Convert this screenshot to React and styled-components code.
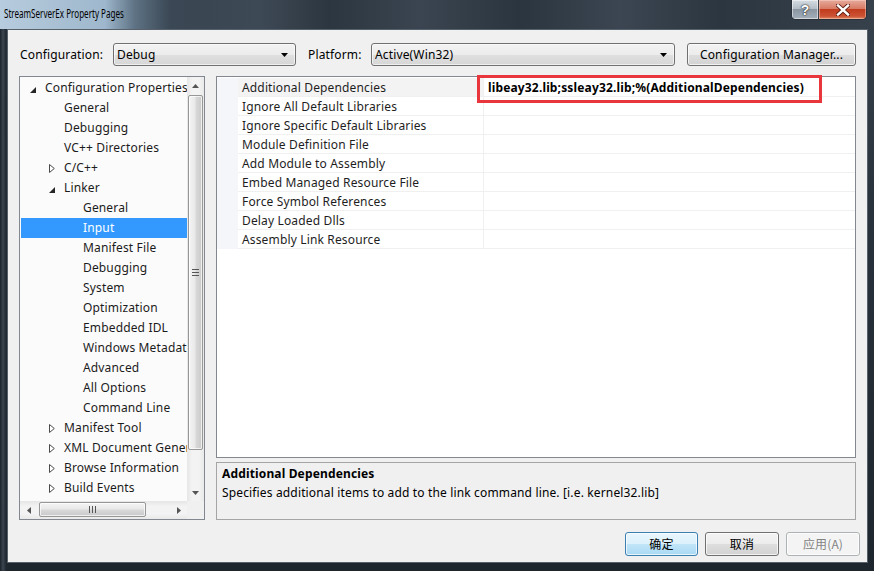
import React from 'react';
import styled, { createGlobalStyle } from 'styled-components';

const Global = createGlobalStyle`
  html, body { margin: 0; padding: 0; background: #1f2832; }
  body { width: 874px; height: 571px; overflow: hidden; font-family: "Noto Sans", "Open Sans", sans-serif; font-size: 12px; color: #000; letter-spacing: 0.15px; }
  * { box-sizing: border-box; }
`;

const Window = styled.div`
  width: 874px;
  height: 571px;
  display: flex;
  flex-direction: column;
  background:
    linear-gradient(90deg, #1a2129 0px, #3b4651 3px, #202830 6px, transparent 8px),
    linear-gradient(180deg, #36424e 0%, #29333d 35%, #1d252d 100%);
  overflow: hidden;
`;

const TitleBar = styled.div`
  height: 29px;
  flex: none;
  display: flex;
  align-items: flex-start;
  background:
    linear-gradient(90deg, rgba(190,212,230,0.95) 0px, rgba(170,196,218,0.9) 105px, rgba(120,146,168,0.6) 135px, rgba(70,86,102,0.2) 170px, transparent 205px),
    linear-gradient(90deg, #2f3b47 0px, #3d4955 260px, #2c3640 330px, #3a4551 420px, #2b353f 520px, #3b4652 620px, #2c3640 720px, #36414c 874px);
`;

const TitleText = styled.span`
  display: inline-block;
  margin: 5px 0 0 4px;
  font-size: 13px;
  line-height: 17px;
  letter-spacing: 0;
  white-space: nowrap;
  color: #000;
  transform: scaleX(0.62);
  transform-origin: left center;
`;

const CaptionGroup = styled.div`
  margin-left: auto;
  margin-right: 7px;
  display: flex;
  height: 20px;
  border: 1px solid #2a3038;
  border-top: none;
  border-radius: 0 0 5px 5px;
  overflow: hidden;
`;

const HelpButton = styled.div`
  width: 27px;
  height: 19px;
  display: flex;
  align-items: center;
  justify-content: center;
  background: linear-gradient(180deg, #d6dce2 0%, #b5bec7 45%, #8a96a1 50%, #a4afba 100%);
  box-shadow: inset 0 0 0 1px rgba(255,255,255,0.5);
  border-right: 1px solid #3a3f46;
  font-family: "Liberation Sans", sans-serif;
  font-weight: bold;
  font-size: 14px;
  color: #fff;
  text-shadow: 0 0 2px #222, 0 0 1px #000;
`;

const CloseButton = styled.div`
  width: 47px;
  height: 19px;
  display: flex;
  align-items: center;
  justify-content: center;
  background: linear-gradient(180deg, #e6aa9c 0%, #d87b66 45%, #c23c1e 50%, #cc5234 85%, #e08a66 100%);
  box-shadow: inset 0 0 0 1px rgba(255,220,210,0.45);
`;

const Client = styled.div`
  flex: 1;
  margin: 0 6px 8px 7px;
  border: 1px solid #56616c;
  background: #f0f0f0;
  padding: 13px 11px 6px 11px;
  display: flex;
  flex-direction: column;
`;

const TopRow = styled.div`
  height: 23px;
  display: flex;
  align-items: center;
  flex: none;
`;

const FieldLabel = styled.div`
  width: ${p => p.w}px;
  margin-left: ${p => p.ml || 0}px;
  padding-left: 1px;
  font-size: 12px;
  line-height: 16px;
  white-space: nowrap;
`;

const Combo = styled.div`
  width: ${p => p.w}px;
  height: 23px;
  border: 1px solid #707070;
  border-radius: 3px;
  background: linear-gradient(180deg, #f3f3f3 0%, #ececec 50%, #e0e0e0 51%, #d6d6d6 100%);
  box-shadow: inset 0 0 0 1px rgba(255,255,255,0.6);
  display: flex;
  align-items: center;
  padding: 0 7px 0 3px;
  font-size: 12px;
  line-height: 16px;
`;

const ComboText = styled.span`
  flex: 1;
`;

const PushButton = styled.div`
  width: ${p => p.w}px;
  height: ${p => p.h || 23}px;
  margin-left: ${p => p.ml || 0}px;
  border: 1px solid ${p => (p.primary ? '#3c7fb1' : p.disabled ? '#adb2b5' : '#707070')};
  border-radius: 3px;
  background: ${p =>
    p.primary
      ? 'linear-gradient(180deg, #eaf6fd 0%, #dcf1fc 50%, #c1e5f8 51%, #a9d9f3 100%)'
      : p.disabled
      ? '#f4f4f4'
      : 'linear-gradient(180deg, #f3f3f3 0%, #ececec 50%, #dedede 51%, #d2d2d2 100%)'};
  box-shadow: inset 0 0 0 1px rgba(255,255,255,0.7);
  display: flex;
  align-items: center;
  justify-content: center;
  font-family: ${p => (p.cjk ? '"Noto Sans CJK SC", "Noto Sans", sans-serif' : '"Noto Sans", sans-serif')};
  font-size: 12px;
  line-height: 16px;
  color: ${p => (p.disabled ? '#838383' : '#000')};
  white-space: nowrap;
`;

const Main = styled.div`
  margin-top: 10px;
  height: 444px;
  display: flex;
  gap: 11px;
  flex: none;
`;

const TreePanel = styled.div`
  width: 186px;
  height: 444px;
  border: 1px solid #828790;
  background: #fbfbfb;
  display: grid;
  grid-template-columns: 167px 17px;
  grid-template-rows: 424px 18px;
`;

const TreeList = styled.div`
  padding-top: 1px;
  padding-left: 1px;
  overflow: hidden;
`;

const TreeRow = styled.div`
  height: 20px;
  display: flex;
  align-items: center;
  padding-left: ${p => 9 + p.level * 19}px;
  background: ${p => (p.selected ? '#3399ff' : 'transparent')};
  color: ${p => (p.selected ? '#fff' : '#1b1b1b')};
  white-space: nowrap;
  font-size: 12px;
  line-height: 16px;
`;

const Expander = styled.span`
  width: 15px;
  height: 20px;
  flex: none;
  display: flex;
  align-items: center;
  padding-top: ${p => (p.open ? 3 : 1)}px;
`;

const VScroll = styled.div`
  display: flex;
  flex-direction: column;
  background: linear-gradient(90deg, #e6e6e6 0%, #f3f3f3 30%, #f3f3f3 70%, #e9e9e9 100%);
`;

const ArrowBtn = styled.div`
  width: ${p => p.w || 17}px;
  height: ${p => p.h || 17}px;
  flex: none;
  display: flex;
  align-items: center;
  justify-content: center;
`;

const VTrack = styled.div`
  flex: 1;
  padding: 1px 1px 0 1px;
`;

const VThumb = styled.div`
  height: 355px;
  border: 1px solid #979797;
  border-radius: 2px;
  background: linear-gradient(90deg, #f4f4f4 0%, #e9e9e9 45%, #d8d8d8 55%, #c9c9c9 100%);
  box-shadow: inset 0 0 0 1px rgba(255,255,255,0.7);
  display: flex;
  align-items: center;
  justify-content: center;
`;

const HScroll = styled.div`
  display: flex;
  align-items: center;
  background: linear-gradient(180deg, #e6e6e6 0%, #f3f3f3 30%, #f3f3f3 70%, #e9e9e9 100%);
`;

const HTrack = styled.div`
  flex: 1;
  height: 18px;
  padding: 1px 0 2px 2px;
`;

const HThumb = styled.div`
  width: 107px;
  height: 15px;
  border: 1px solid #979797;
  border-radius: 2px;
  background: linear-gradient(180deg, #f4f4f4 0%, #e9e9e9 45%, #d8d8d8 55%, #c9c9c9 100%);
  box-shadow: inset 0 0 0 1px rgba(255,255,255,0.7);
  display: flex;
  align-items: center;
  justify-content: center;
`;

const Corner = styled.div`
  background: #f0f0f0;
`;

const RightCol = styled.div`
  width: 640px;
  display: flex;
  flex-direction: column;
  gap: 4px;
`;

const PropGrid = styled.div`
  position: relative;
  height: 382px;
  border: 1px solid #828790;
  background: #fff;
  padding-top: 1px;
`;

const PropRow = styled.div`
  height: 19px;
  display: grid;
  grid-template-columns: 21px 245px 1fr;
`;

const MarginCell = styled.div`
  background: #f4f6fa;
`;

const NameCell = styled.div`
  padding: 1px 0 0 4px;
  border-bottom: 1px solid #f0f0f0;
  background: ${p => (p.active ? '#f3f3f3' : '#fff')};
  font-size: 12px;
  line-height: 17px;
  color: #1e1e1e;
  white-space: nowrap;
`;

const ValueCell = styled.div`
  padding: 1px 0 0 4px;
  border-left: 1px solid #f0f0f0;
  border-bottom: 1px solid #f0f0f0;
  font-size: 12px;
  font-weight: ${p => (p.bold ? 700 : 400)};
  line-height: 17px;
  color: #000;
  white-space: nowrap;
  overflow: hidden;
`;

const Highlight = styled.div`
  position: absolute;
  left: 260px;
  top: -2px;
  width: 345px;
  height: 28px;
  border: 3px solid #e8363c;
  pointer-events: none;
`;

const Description = styled.div`
  height: 58px;
  border: 1px solid #a5a5a5;
  background: #f0f0f0;
  padding: 1px 0 0 5px;
  font-size: 12px;
  line-height: 19px;
`;

const DescTitle = styled.div`
  font-weight: 700;
`;

const Footer = styled.div`
  margin-top: 12px;
  margin-right: -4px;
  height: 24px;
  display: flex;
  justify-content: flex-end;
  gap: 7px;
  flex: none;
`;

const tree = [
  { label: 'Configuration Properties', level: 0, arrow: 'open' },
  { label: 'General', level: 1 },
  { label: 'Debugging', level: 1 },
  { label: 'VC++ Directories', level: 1 },
  { label: 'C/C++', level: 1, arrow: 'closed' },
  { label: 'Linker', level: 1, arrow: 'open' },
  { label: 'General', level: 2 },
  { label: 'Input', level: 2, selected: true },
  { label: 'Manifest File', level: 2 },
  { label: 'Debugging', level: 2 },
  { label: 'System', level: 2 },
  { label: 'Optimization', level: 2 },
  { label: 'Embedded IDL', level: 2 },
  { label: 'Windows Metadata', level: 2 },
  { label: 'Advanced', level: 2 },
  { label: 'All Options', level: 2 },
  { label: 'Command Line', level: 2 },
  { label: 'Manifest Tool', level: 1, arrow: 'closed' },
  { label: 'XML Document Generator', level: 1, arrow: 'closed' },
  { label: 'Browse Information', level: 1, arrow: 'closed' },
  { label: 'Build Events', level: 1, arrow: 'closed' },
];

const props = [
  { name: 'Additional Dependencies', value: 'libeay32.lib;ssleay32.lib;%(AdditionalDependencies)', active: true },
  { name: 'Ignore All Default Libraries' },
  { name: 'Ignore Specific Default Libraries' },
  { name: 'Module Definition File' },
  { name: 'Add Module to Assembly' },
  { name: 'Embed Managed Resource File' },
  { name: 'Force Symbol References' },
  { name: 'Delay Loaded Dlls' },
  { name: 'Assembly Link Resource' },
];

const OpenArrow = () => (
  <svg width="6" height="6" viewBox="0 0 6 6"><polygon points="6,0 6,6 0,6" fill="#262626" /></svg>
);
const ClosedArrow = () => (
  <svg width="6" height="9" viewBox="0 0 6 9"><polygon points="0.5,0.5 5.3,4.5 0.5,8.5" fill="#fff" stroke="#4a4a4a" /></svg>
);
const DropArrow = () => (
  <svg width="7" height="4" viewBox="0 0 7 4"><polygon points="0,0 7,0 3.5,4" fill="#000" /></svg>
);
const Tri = ({ dir }) => {
  const pts = {
    up: '0,4 7,4 3.5,0',
    down: '0,0 7,0 3.5,4',
    left: '4,0 4,7 0,3.5',
    right: '0,0 0,7 4,3.5',
  }[dir];
  const vertical = dir === 'up' || dir === 'down';
  return (
    <svg width={vertical ? 7 : 4} height={vertical ? 4 : 7} viewBox={vertical ? '0 0 7 4' : '0 0 4 7'}>
      <polygon points={pts} fill="#555" />
    </svg>
  );
};
const GripV = () => (
  <svg width="7" height="7" viewBox="0 0 7 7">
    <path d="M0 0.5H7M0 3.5H7M0 6.5H7" stroke="#555" strokeWidth="1" />
  </svg>
);
const GripH = () => (
  <svg width="7" height="7" viewBox="0 0 7 7">
    <path d="M0.5 0V7M3.5 0V7M6.5 0V7" stroke="#555" strokeWidth="1" />
  </svg>
);
const CloseGlyph = () => (
  <svg width="14" height="12" viewBox="0 0 14 12">
    <path d="M2 1.5L12 10.5M12 1.5L2 10.5" stroke="#5a1a10" strokeWidth="4.2" strokeLinecap="square" />
    <path d="M2 1.5L12 10.5M12 1.5L2 10.5" stroke="#fff" strokeWidth="2.4" strokeLinecap="square" />
  </svg>
);

export default function App() {
  return (
    <>
      <Global />
      <Window>
        <TitleBar>
          <TitleText>StreamServerEx Property Pages</TitleText>
          <CaptionGroup>
            <HelpButton>?</HelpButton>
            <CloseButton><CloseGlyph /></CloseButton>
          </CaptionGroup>
        </TitleBar>
        <Client>
          <TopRow>
            <FieldLabel w={94}>Configuration:</FieldLabel>
            <Combo w={183}><ComboText>Debug</ComboText><DropArrow /></Combo>
            <FieldLabel w={64} ml={11}>Platform:</FieldLabel>
            <Combo w={304}><ComboText>Active(Win32)</ComboText><DropArrow /></Combo>
            <PushButton w={169} ml={12}>Configuration Manager...</PushButton>
          </TopRow>
          <Main>
            <TreePanel>
              <TreeList>
                {tree.map((t, i) => (
                  <TreeRow key={i} level={t.level} selected={t.selected}>
                    <Expander open={t.arrow === 'open'}>
                      {t.arrow === 'open' && <OpenArrow />}
                      {t.arrow === 'closed' && <ClosedArrow />}
                    </Expander>
                    {t.label}
                  </TreeRow>
                ))}
              </TreeList>
              <VScroll>
                <ArrowBtn><Tri dir="up" /></ArrowBtn>
                <VTrack><VThumb><GripV /></VThumb></VTrack>
                <ArrowBtn><Tri dir="down" /></ArrowBtn>
              </VScroll>
              <HScroll>
                <ArrowBtn h={18}><Tri dir="left" /></ArrowBtn>
                <HTrack><HThumb><GripH /></HThumb></HTrack>
                <ArrowBtn h={18}><Tri dir="right" /></ArrowBtn>
              </HScroll>
              <Corner />
            </TreePanel>
            <RightCol>
              <PropGrid>
                {props.map((p, i) => (
                  <PropRow key={i}>
                    <MarginCell />
                    <NameCell active={p.active}>{p.name}</NameCell>
                    <ValueCell bold={!!p.value}>{p.value || ''}</ValueCell>
                  </PropRow>
                ))}
                <Highlight />
              </PropGrid>
              <Description>
                <DescTitle>Additional Dependencies</DescTitle>
                <div>Specifies additional items to add to the link command line. [i.e. kernel32.lib]</div>
              </Description>
            </RightCol>
          </Main>
          <Footer>
            <PushButton w={73} h={24} primary cjk>确定</PushButton>
            <PushButton w={74} h={24} cjk>取消</PushButton>
            <PushButton w={74} h={24} disabled cjk>应用(A)</PushButton>
          </Footer>
        </Client>
      </Window>
    </>
  );
}
